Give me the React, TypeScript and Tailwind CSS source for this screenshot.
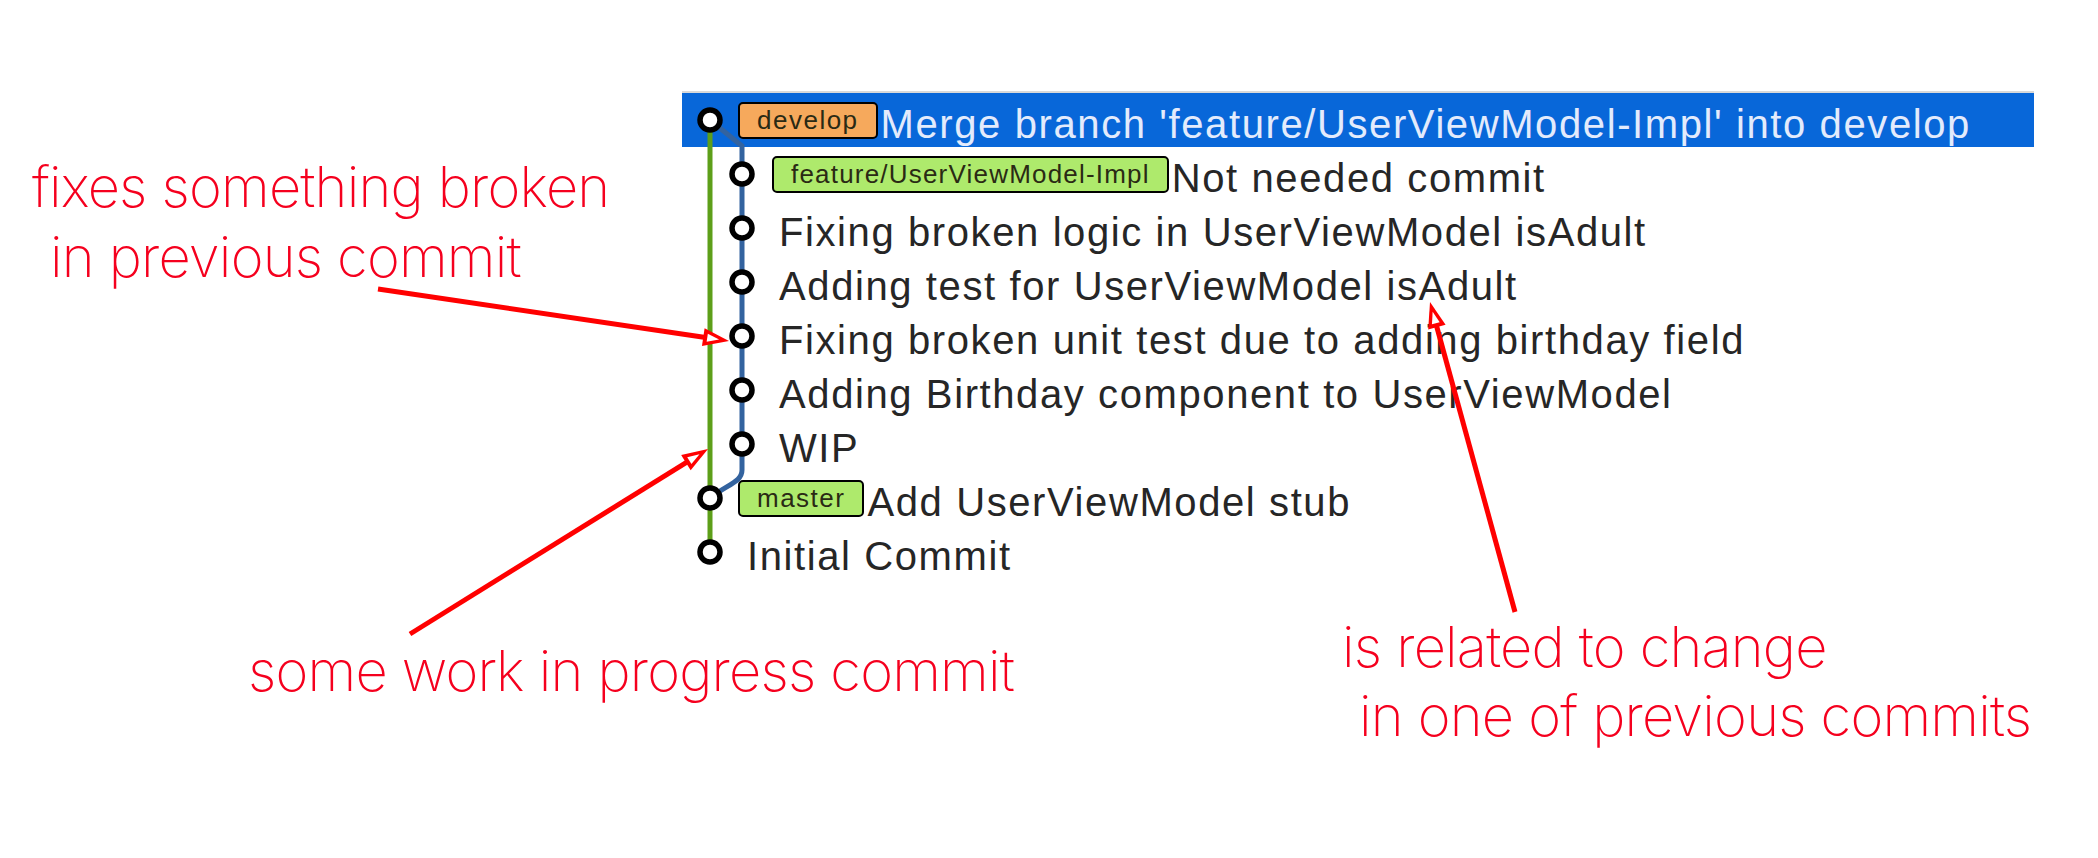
import React from "react";

type Row = {
  pad: string;
  badge?: string;
  badgeBg?: string;
  badgeTrack?: string;
  text: string;
  selected?: boolean;
};

const rows: Row[] = [
  {
    pad: "pl-[56px]",
    badge: "develop",
    badgeBg: "bg-[#f6a95c]",
    badgeTrack: "tracking-[1.5px]",
    text: "Merge branch 'feature/UserViewModel-Impl' into develop",
    selected: true,
  },
  {
    pad: "pl-[90px]",
    badge: "feature/UserViewModel-Impl",
    badgeBg: "bg-[#aeea6c]",
    badgeTrack: "tracking-[1.2px]",
    text: "Not needed commit",
  },
  { pad: "pl-[97px]", text: "Fixing broken logic in UserViewModel isAdult" },
  { pad: "pl-[97px]", text: "Adding test for UserViewModel isAdult" },
  { pad: "pl-[97px]", text: "Fixing broken unit test due to adding birthday field" },
  { pad: "pl-[97px]", text: "Adding Birthday component to UserViewModel" },
  { pad: "pl-[97px]", text: "WIP" },
  {
    pad: "pl-[56px]",
    badge: "master",
    badgeBg: "bg-[#aeea6c]",
    badgeTrack: "tracking-[1.5px]",
    text: "Add UserViewModel stub",
  },
  { pad: "pl-[65px]", text: "Initial Commit" },
];

const L1 = 28;
const L2 = 60;
const cy = (i: number) => 27 + i * 54;

function Graph() {
  const nodes: [number, number][] = [
    [L1, cy(0)],
    [L2, cy(1)],
    [L2, cy(2)],
    [L2, cy(3)],
    [L2, cy(4)],
    [L2, cy(5)],
    [L2, cy(6)],
    [L1, cy(7)],
    [L1, cy(8)],
  ];
  return (
    <svg
      className="absolute left-0 top-0 pointer-events-none"
      width={110}
      height={486}
      viewBox="0 0 110 486"
    >
      <line x1={L1} y1={cy(0)} x2={L1} y2={cy(8)} stroke="#5d9f19" strokeWidth={5} />
      <path
        d={`M${L1} ${cy(0)} L${L2} ${cy(0) + 26} V${cy(6) + 26} C${L2} ${cy(6) + 38} ${L1 + 18} ${cy(7) - 14} ${L1} ${cy(7)}`}
        fill="none"
        stroke="#33639f"
        strokeWidth={5}
      />
      {nodes.map(([x, y], i) => (
        <circle key={i} cx={x} cy={y} r={10} fill="#fff" stroke="#000" strokeWidth={5.5} />
      ))}
    </svg>
  );
}

function arrow(x1: number, y1: number, x2: number, y2: number) {
  const dx = x2 - x1;
  const dy = y2 - y1;
  const len = Math.hypot(dx, dy);
  const ux = dx / len;
  const uy = dy / len;
  const hl = 26;
  const hw = 9;
  const bx = x2 - ux * hl;
  const by = y2 - uy * hl;
  const px = -uy;
  const py = ux;
  const pts = `${x2},${y2} ${bx + px * hw},${by + py * hw} ${bx - px * hw},${by - py * hw}`;
  const ix = x2 - ux * 10;
  const iy = y2 - uy * 10;
  const ibx = x2 - ux * 22;
  const iby = y2 - uy * 22;
  const inner = `${ix},${iy} ${ibx + px * 4},${iby + py * 4} ${ibx - px * 4},${iby - py * 4}`;
  return (
    <g>
      <line x1={x1} y1={y1} x2={bx + ux * 4} y2={by + uy * 4} stroke="#ff0000" strokeWidth={5} />
      <polygon points={pts} fill="#ff0000" />
      <polygon points={inner} fill="#ffffff" />
    </g>
  );
}

const annot =
  "font-['Inter','Roboto',sans-serif] font-extralight text-[56px] tracking-[-0.8px] leading-[70px] text-[#f5001e] whitespace-nowrap";

export default function App() {
  return (
    <div className="relative w-[2098px] h-[858px] bg-white overflow-hidden">
      <div className="pt-[91px] pl-[682px]">
        <div className="relative w-[1352px] border-t-2 border-[#d9d9d9]">
          {rows.map((r, i) => (
            <div
              key={i}
              className={`flex items-center h-[54px] ${r.pad} ${r.selected ? "bg-[#0867d9] text-[#e3ebfc]" : "text-[#262626]"}`}
            >
              {r.badge && (
                <span
                  className={`flex items-center h-[37px] px-[17px] border-[2.5px] border-black rounded-[5px] ${r.badgeBg} ${r.badgeTrack} text-[26px] text-[#2a2a14] font-['Liberation_Sans',sans-serif]`}
                >
                  {r.badge}
                </span>
              )}
              <span
                className={`${r.badge ? "ml-[3px]" : ""} pt-[8px] text-[40px] tracking-[1.6px] font-['Liberation_Sans',sans-serif] whitespace-nowrap`}
              >
                {r.text}
              </span>
            </div>
          ))}
          <Graph />
        </div>
      </div>

      <div className={`absolute left-[32px] top-[152px] ${annot}`}>
        <div>fixes something broken</div>
        <div className="pl-[18px]">in previous commit</div>
      </div>

      <div className={`absolute left-[248px] top-[636px] ${annot}`}>some work in progress commit</div>

      <div className={`absolute left-[1342px] top-[613px] ${annot}`}>
        <div className="leading-[69px]">is related to change</div>
        <div className="pl-[17px] leading-[69px]">in one of previous commits</div>
      </div>

      <svg className="absolute inset-0 pointer-events-none" width={2098} height={858}>
        {arrow(378, 289, 729, 341)}
        {arrow(410, 634, 708, 449)}
        {arrow(1515, 612, 1430, 302)}
      </svg>
    </div>
  );
}
